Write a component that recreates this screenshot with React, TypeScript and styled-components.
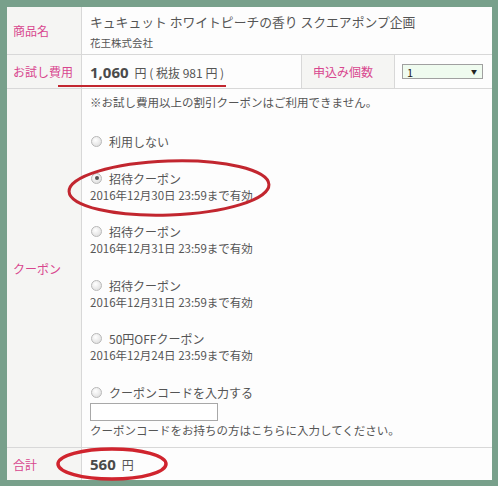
import React from "react";
import styled, { createGlobalStyle } from "styled-components";

const GlobalStyle = createGlobalStyle`
  body {
    margin: 0;
    background: #78a08b;
    font-family: "Noto Sans CJK JP", "Noto Sans", sans-serif;
    color: #555;
  }
`;

const Page = styled.div`
  position: relative;
  width: 498px;
  height: 486px;
  padding: 7px 6px 6px 7px;
  box-sizing: border-box;
`;

const Table = styled.div`
  background: #fdfdfd;
  width: 485px;
  height: 473px;
  display: grid;
  grid-template-rows: 48px 34px 359px 1fr;
`;

const Row = styled.div<{ $cols?: string; $last?: boolean }>`
  display: grid;
  grid-template-columns: ${(p) => p.$cols || "75px 1fr"};
  border-bottom: ${(p) => (p.$last ? "none" : "1px solid #d8d8d8")};
`;

const Label = styled.div<{ $border?: boolean }>`
  background: #f5f5f3;
  color: #d8468e;
  font-size: 12px;
  display: flex;
  align-items: center;
  padding-left: ${(p) => (p.$border ? "11px" : "6px")};
  border-right: 1px solid #d8d8d8;
  border-left: ${(p) => (p.$border ? "1px solid #d8d8d8" : "none")};
`;

const Cell = styled.div`
  padding-left: 8px;
  display: flex;
  flex-direction: column;
  justify-content: center;
`;

const Title = styled.div`
  font-size: 12.8px;
  line-height: 18px;
  margin-top: 2px;
`;

const Maker = styled.div`
  font-size: 10.5px;
  line-height: 16px;
  margin-top: 4px;
`;

const Price = styled.div`
  display: flex;
  align-items: baseline;
  gap: 6px;
  font-size: 12px;
`;

const Amount = styled.span`
  font-size: 15px;
  font-weight: bold;
  font-family: "Open Sans", "Noto Sans", sans-serif;
  color: #4a4a4a;
`;

const SelectCell = styled.div`
  display: flex;
  align-items: center;
  padding-left: 7px;
`;

const FakeSelect = styled.div`
  width: 70px;
  height: 13px;
  border: 1px solid #a0a0a0;
  background: #effbef;
  display: flex;
  align-items: center;
  justify-content: space-between;
  padding: 0 5px 0 4px;
  font-size: 11px;
  color: #222;
  box-sizing: content-box;
`;

const Arrow = styled.span`
  font-size: 6px;
`;

const CouponCell = styled.div`
  padding: 5px 0 0 8px;
  font-size: 11.5px;
  line-height: 17px;
`;

const Note = styled.div`
  margin-bottom: 22px;
`;

const Option = styled.div`
  margin-bottom: 19.5px;
`;

const RadioLine = styled.div`
  display: flex;
  align-items: center;
  gap: 7px;
  font-size: 12px;
`;

const Radio = styled.span<{ $checked?: boolean }>`
  width: 9px;
  height: 9px;
  margin-left: 1px;
  border-radius: 50%;
  border: 1px solid #b8b8b8;
  background: radial-gradient(circle at 40% 35%, #fff, #d8d8d8);
  position: relative;
  flex-shrink: 0;
  &::after {
    content: "";
    display: ${(p) => (p.$checked ? "block" : "none")};
    position: absolute;
    left: 2.5px;
    top: 2.5px;
    width: 4px;
    height: 4px;
    border-radius: 50%;
    background: #555;
  }
`;

const CodeInput = styled.div`
  width: 126px;
  height: 16px;
  border: 1px solid #a8a8a8;
  background: #fff;
  margin: 2px 0 1px;
`;

const Total = styled.div`
  display: flex;
  align-items: baseline;
  gap: 6px;
  font-size: 12px;
`;

const Overlay = styled.svg`
  position: absolute;
  left: 0;
  top: 0;
  pointer-events: none;
`;

const coupons = [
  { name: "招待クーポン", until: "2016年12月30日 23:59まで有効", checked: true },
  { name: "招待クーポン", until: "2016年12月31日 23:59まで有効" },
  { name: "招待クーポン", until: "2016年12月31日 23:59まで有効" },
  { name: "50円OFFクーポン", until: "2016年12月24日 23:59まで有効" },
];

export default function App() {
  return (
    <Page>
      <GlobalStyle />
      <Table>
        <Row>
          <Label>商品名</Label>
          <Cell>
            <Title>キュキュット ホワイトピーチの香り スクエアポンプ企画</Title>
            <Maker>花王株式会社</Maker>
          </Cell>
        </Row>
        <Row $cols="75px 219px 94px 1fr">
          <Label>お試し費用</Label>
          <Cell>
            <Price>
              <Amount>1,060</Amount>
              <span>円 ( 税抜 981 円 )</span>
            </Price>
          </Cell>
          <Label $border>申込み個数</Label>
          <SelectCell>
            <FakeSelect>
              <span>1</span>
              <Arrow>▼</Arrow>
            </FakeSelect>
          </SelectCell>
        </Row>
        <Row>
          <Label>クーポン</Label>
          <CouponCell>
            <Note>※お試し費用以上の割引クーポンはご利用できません。</Note>
            <Option>
              <RadioLine>
                <Radio />
                利用しない
              </RadioLine>
            </Option>
            {coupons.map((c, i) => (
              <Option key={i}>
                <RadioLine>
                  <Radio $checked={c.checked} />
                  {c.name}
                </RadioLine>
                <div>{c.until}</div>
              </Option>
            ))}
            <RadioLine>
              <Radio />
              クーポンコードを入力する
            </RadioLine>
            <CodeInput />
            <div>クーポンコードをお持ちの方はこちらに入力してください。</div>
          </CouponCell>
        </Row>
        <Row $last>
          <Label>合計</Label>
          <Cell>
            <Total>
              <Amount>560</Amount>
              <span>円</span>
            </Total>
          </Cell>
        </Row>
      </Table>
      <Overlay width="498" height="486" viewBox="0 0 498 486">
        <line x1="58" y1="86" x2="226" y2="86" stroke="#c2262f" strokeWidth="2" />
        <ellipse
          cx="169"
          cy="188"
          rx="100"
          ry="27"
          fill="none"
          stroke="#c2262f"
          strokeWidth="3"
          transform="rotate(-2 169 188)"
        />
        <ellipse cx="112" cy="464" rx="54" ry="15" fill="none" stroke="#d0242e" strokeWidth="3.5" />
      </Overlay>
    </Page>
  );
}
